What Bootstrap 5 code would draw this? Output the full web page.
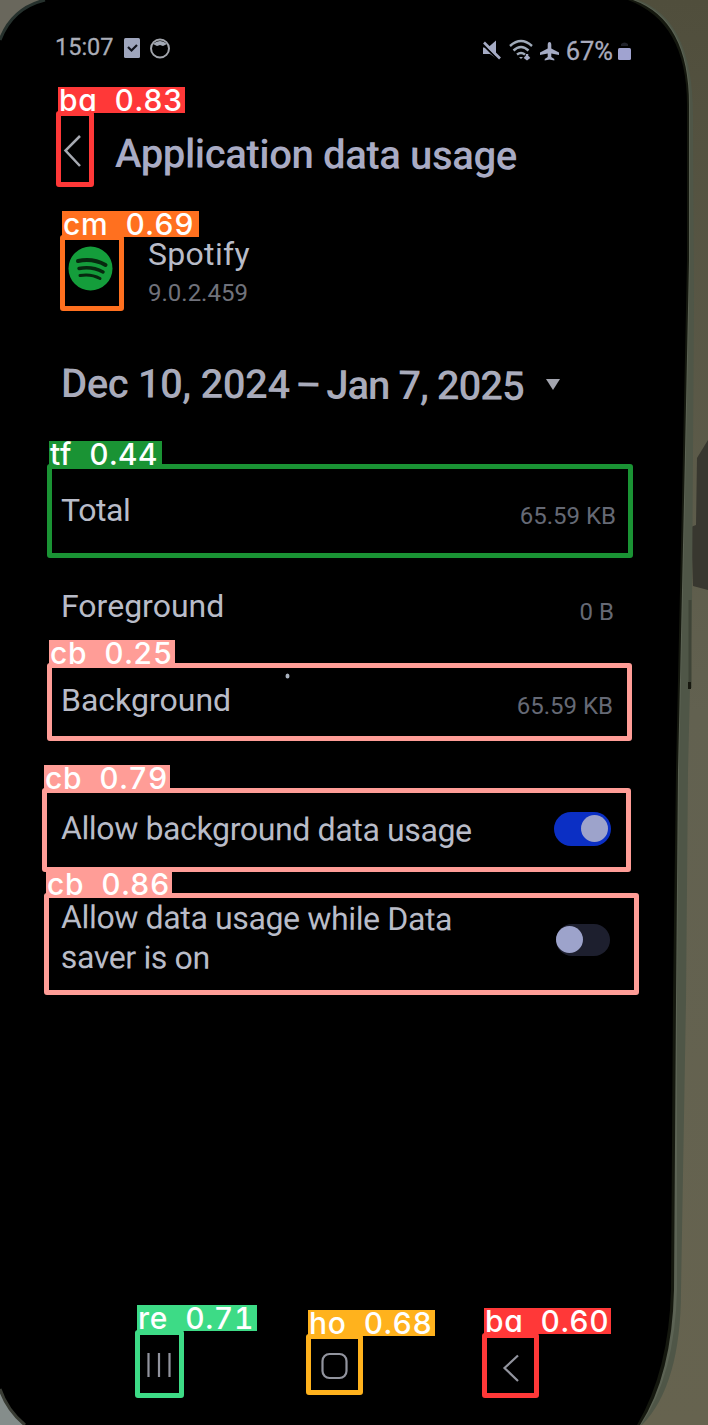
<!DOCTYPE html>
<html lang="en">
<head>
<meta charset="utf-8">
<meta name="viewport" content="width=device-width, initial-scale=1">
<title>Application data usage</title>
<link href="https://cdn.jsdelivr.net/npm/bootstrap@5.3.0/dist/css/bootstrap.min.css" rel="stylesheet">
<style>
body{background:#000;font-family:Roboto,"Liberation Sans",sans-serif;color:#b9bcc8;width:708px;height:1425px;overflow:hidden}
.scene{width:708px;height:1425px}
.backdrop{inset:0;z-index:0}
.screen{z-index:1;width:708px;height:1425px;padding-left:61px;padding-right:94px}
.screen svg{flex:none}
.tilt{transform:rotate(.35deg);transform-origin:left center;white-space:nowrap}
.status{height:96px;margin-left:-6px;margin-right:-18px}
.clock{font-size:23.5px;color:#aaadb7;-webkit-text-stroke:.3px}
.batt{font-size:25.5px;color:#a8abbd;-webkit-text-stroke:.3px}
.status-right{padding-top:6px}
.heading{height:110px}
.title-text{font-size:40px;font-weight:500;line-height:50px;color:#a9abc4;letter-spacing:-.36px;padding-top:6px}
.app-row{height:126px}
.app-name{font-size:32px;line-height:40px;letter-spacing:.3px}
.version{font-size:24px;line-height:38px;color:#70727b}
.date-row{height:104px;margin-bottom:29px}
.date-text{font-size:40px;font-weight:500;line-height:50px;color:#a9abbb;letter-spacing:-.4px}
.date-dash{word-spacing:-4px}
.date-end{letter-spacing:-1px}
.caret-icon{margin-left:19px}
.lbl{font-size:32px;line-height:40px}
.lbl.tilt{letter-spacing:-.36px}
.val{font-size:24px;padding-top:11px;color:#656975;white-space:nowrap}
.row-total{height:90px;margin-right:-2px}
.row-total .lbl{letter-spacing:-.4px}
.row-fore{height:102px}
.row-back{height:86px;margin-right:1px;margin-bottom:45px}
.row-allow{height:80px;margin-right:3px}
.row-saver{height:138px;margin-right:4px}
.toggle{width:57px;height:34px;border-radius:17px;background:#0b2fc4;padding:3px;position:relative;top:1px}
.toggle i{width:27px;height:27px;border-radius:50%;background:#9da3cb;display:block}
.toggle.off{width:54px;height:32px;background:#1d1f2e;padding:2px 0;top:3px}
.nav-keys{height:72px;margin-bottom:23px}
.det{z-index:3;border:5px solid var(--c);border-radius:3px}
.tag{z-index:4;height:26px;padding-left:1px;background:var(--c);color:#fff;font:500 30px/27px Inter,sans-serif;font-feature-settings:"cv11","tnum";letter-spacing:.6px;white-space:pre}
.red{--c:#ff3838}.orange{--c:#ff701f}.green{--c:#1a9334}.pink{--c:#ff9d97}.mint{--c:#3ddb86}.amber{--c:#ffb21d}
</style>
</head>
<body>
<div class="scene position-relative">
<svg class="backdrop position-absolute" width="708" height="1425" viewBox="0 0 708 1425">
<defs><linearGradient id="wall" x2="0" y2="1"><stop offset="0" stop-color="#504e3c"/><stop offset=".5" stop-color="#626150"/><stop offset="1" stop-color="#66634f"/></linearGradient></defs>
<rect width="708" height="1425" fill="#000"/>
<path d="M600 0H708V1425H600Z" fill="url(#wall)"/>
<path d="M708 440L697 458L696 525L691 527L693 586L708 590Z" fill="#38372f"/>
<path d="M600 0H638Q693 20 693 115L694 300L692 600L688 770L686 1000L681 1290Q681 1385 642 1425H600Z" fill="#4f5647"/>
<path d="M600 0H635Q690 20 690 105L690 260L685 500L679 770L677 1000L677 1290Q675 1375 641 1425H600Z" fill="#5c6354"/>
<path d="M600 0H633Q689 20 689 105L689 260L684 500L678 770L676 1000L674 1290Q672 1375 640 1425H600Z" fill="#15180f"/>
<path d="M600 0H628Q687 22 687 105L687 260L682 500L676 770L673 1000L671 1290Q669 1370 637 1425H600Z" fill="#000"/>
<path d="M690 600V688" stroke="#3f4437" stroke-width="3"/><rect x="688" y="682" width="3" height="7" fill="#17180f"/>
<path d="M0 0H45Q12 8 0 40Z" fill="#69675c"/><path d="M45 0Q12 8 0 40" fill="none" stroke="#26312d" stroke-width="3"/>
<path d="M0 1390Q6 1410 24 1425H0Z" fill="#858d8b"/><path d="M0 1389Q7 1410 25 1425" fill="none" stroke="#393c34" stroke-width="3"/>
<ellipse cx="287.500" cy="676" rx="2" ry="2.600" fill="#a9b2bf"/>
</svg>

<main class="screen position-relative d-flex flex-column">
<header class="status d-flex align-items-center justify-content-between">
 <div class="d-flex align-items-center">
  <span class="clock">15:07</span>
  <svg class="ms-1" width="56" height="24" viewBox="0 0 56 24"><rect x="6" y="2" width="16" height="20" rx="1.500" fill="#9fa6bd"/><path d="M10 11l3.500 3.500L19 9" fill="none" stroke="#10131c" stroke-width="2.200"/><circle cx="42" cy="12.500" r="9" fill="none" stroke="#a3a6ad" stroke-width="2"/><path d="M35 8Q42 2 49 8L45 10L42 9L39 10Z" fill="#a3a9b5"/></svg>
 </div>
 <div class="status-right d-flex align-items-center">
  <svg width="80" height="24" viewBox="482 39 80 24"><g fill="#a5abc4"><path d="M483 47.500h5l8-7v16l-1 1-5-3.500h-7z"/><path d="M482.500 44L498.500 60" stroke="#000" stroke-width="2"/><path d="M484 42.500L500 58.500" stroke="#a5abc4" stroke-width="2.600"/></g>
  <g fill="none" stroke="#9faab9" stroke-width="2.400"><path d="M510 46q11-10 22 0M513.500 50.500q7.500-7 15 0M517 54.500q4-3 8 0"/></g><path d="M519 57l2 2 2-2z" fill="#9faab9"/><path d="M527 54v4m-2.500-1l2.500 2 2.500-2" stroke="#a5abc4" stroke-width="2.500" fill="none"/>
  <path d="M549.500 42q1.800 0 1.800 3v3.500l7.700 4v2.500l-7.700-1.500v3.500l3 2v1.500l-4.800-1-4.800 1v-1.500l3-2v-3.500l-7.700 1.500v-2.500l7.700-4v-3.500q0-3 1.800-3z" fill="#a5abc4"/></svg>
  <span class="batt ms-1">67%</span>
  <svg class="ms-1" width="15" height="24" viewBox="0 0 15 24"><path d="M4 5q3.500-3 7 0v2H4z" fill="#20222a"/><rect x="1" y="9" width="13" height="12" rx="1.500" fill="#a0a3d0"/></svg>
 </div>
</header>

<div class="heading d-flex align-items-center">
 <svg width="54" height="40" viewBox="61 131 54 40"><path d="M80 136L65.500 150.500L80 166" fill="none" stroke="#a7aab2" stroke-width="2.500"/></svg>
 <h1 class="title-text tilt m-0">Application data usage</h1>
</div>

<section class="app-row d-flex align-items-center">
 <svg width="87" height="48" viewBox="61 245 87 48"><circle cx="90.500" cy="268.500" r="22" fill="#149d3b"/><g fill="none" stroke="#07290f" stroke-linecap="round"><path d="M78 261q15-3 27.500 4" stroke-width="4"/><path d="M79 268.500q13-2.500 24 3.500" stroke-width="3.500"/><path d="M80 275.500q11-2 20 3" stroke-width="3"/></g></svg>
 <div class="pt-2"><div class="app-name">Spotify</div><div class="version">9.0.2.459</div></div>
</section>

<div class="date-row d-flex align-items-center">
 <h2 class="date-text tilt m-0">Dec 10, 2024<span class="date-dash"> – </span><span class="date-end">Jan 7, 2025</span></h2>
 <svg class="caret-icon" width="20" height="16" viewBox="0 0 20 16"><path d="M3 3H17L10 14Z" fill="#a3a5af"/></svg>
</div>

<div class="row-total d-flex align-items-center justify-content-between"><span class="lbl">Total</span><span class="val">65.59 KB</span></div>
<div class="row-fore d-flex align-items-center justify-content-between"><span class="lbl">Foreground</span><span class="val">0 B</span></div>
<div class="row-back d-flex align-items-center justify-content-between"><span class="lbl">Background</span><span class="val">65.59 KB</span></div>
<div class="row-allow d-flex align-items-center justify-content-between"><span class="lbl tilt">Allow background data usage</span><span class="toggle d-flex justify-content-end"><i></i></span></div>
<div class="row-saver d-flex align-items-center justify-content-between"><span class="lbl tilt">Allow data usage while Data<br>saver is on</span><span class="toggle off"><i></i></span></div>

<nav class="nav-keys mt-auto d-flex align-items-center">
 <svg width="500" height="72" viewBox="61 1330 500 72"><g fill="none" stroke="#92949e" stroke-width="2.200"><path d="M148.500 1353v24M159 1353v24M169.500 1353v24"/><rect x="322.500" y="1354" width="24" height="24" rx="7"/><path d="M518 1355.500L504.500 1368L518 1381"/></g></svg>
</nav>
</main>

<div class="det red position-absolute" style="left:56px;top:111px;width:38px;height:76px"></div><div class="tag red position-absolute" style="left:58px;top:87px;width:127px">ba  0.83</div>
<div class="det orange position-absolute" style="left:60px;top:235px;width:64px;height:76px"></div><div class="tag orange position-absolute" style="left:62px;top:211px;width:137px">cm  0.69</div>
<div class="det green position-absolute" style="left:47px;top:464px;width:586px;height:94px"></div><div class="tag green position-absolute" style="left:49px;top:441px;width:113px">tf  0.44</div>
<div class="det pink position-absolute" style="left:47px;top:663px;width:585px;height:78px"></div><div class="tag pink position-absolute" style="left:49px;top:640px;width:126px">cb  0.25</div>
<div class="det pink position-absolute" style="left:42px;top:788px;width:589px;height:84px"></div><div class="tag pink position-absolute" style="left:44px;top:765px;width:126px">cb  0.79</div>
<div class="det pink position-absolute" style="left:44px;top:893px;width:595px;height:102px"></div><div class="tag pink position-absolute" style="left:46px;top:871px;width:126px">cb  0.86</div>
<div class="det mint position-absolute" style="left:135px;top:1330px;width:49px;height:68px"></div><div class="tag mint position-absolute" style="left:137px;top:1305px;width:120px">re  0.71</div>
<div class="det amber position-absolute" style="left:306px;top:1334px;width:57px;height:61px"></div><div class="tag amber position-absolute" style="left:308px;top:1310px;width:127px">ho  0.68</div>
<div class="det red position-absolute" style="left:482px;top:1333px;width:57px;height:65px"></div><div class="tag red position-absolute" style="left:484px;top:1308px;width:127px">ba  0.60</div>
</div>
<script src="https://cdn.jsdelivr.net/npm/bootstrap@5.3.0/dist/js/bootstrap.bundle.min.js"></script>
</body>
</html>
